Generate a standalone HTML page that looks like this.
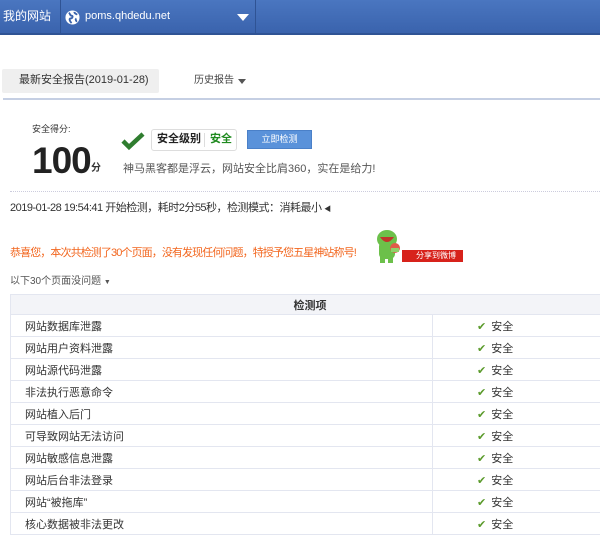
<!DOCTYPE html>
<html><head><meta charset="utf-8"><style>
*{margin:0;padding:0;box-sizing:border-box}
body{width:600px;height:534px;overflow:hidden;background:#fff;font-family:"Liberation Sans","Noto Sans CJK SC",sans-serif;color:#333;position:relative}
.a{position:absolute;white-space:nowrap;line-height:1.2}
.bar{position:absolute;left:0;top:0;width:600px;height:35px;background:linear-gradient(#4a76c0,#3a63ad);border-bottom:2px solid #2f5394}
.div{position:absolute;top:0;width:1px;height:35px;background:#2f5394}
table{position:absolute;left:10px;top:294px;width:600px;border-collapse:collapse;font-size:11px}
td,th{border:1px solid #e3e6f0;height:22px;padding:0}
th{background:#f3f4f8;font-weight:bold;height:20px;color:#333}
td.n{padding-left:14px;width:422px;color:#333}
td.s{padding-left:44px;color:#333}
.ck{color:#5a9a2a;font-size:11px;margin-right:5px}
</style></head><body>
<div class="bar"></div>
<div class="div" style="left:60px"></div>
<div class="div" style="left:255px"></div>
<div class="a" style="left:3px;top:9px;color:#fff;font-size:12px">我的网站</div>
<svg class="a" style="left:65px;top:10px" width="15" height="15" viewBox="0 0 16 16"><circle cx="8" cy="8" r="7.5" fill="#fff"/><path d="M4 3c2 1 1 3 3 3s1 3 -1 3 -1 3 1 5M10 2c0 2 2 2 3 3M11 9c1 1 0 3 2 3" stroke="#3a63ad" stroke-width="2" fill="none"/></svg>
<div class="a" style="left:85px;top:10px;color:#fff;font-size:11px">poms.qhdedu.net</div>
<div class="a" style="left:237px;top:14px;width:0;height:0;border-left:6px solid transparent;border-right:6px solid transparent;border-top:7px solid #fff"></div>

<div class="a" style="left:2px;top:69px;width:157px;height:24px;background:#efefef;border-radius:2px"></div>
<div class="a" style="left:19px;top:74px;font-size:11px;color:#333">最新安全报告(2019-01-28)</div>
<div class="a" style="left:194px;top:75px;font-size:10px;color:#444">历史报告</div>
<div class="a" style="left:238px;top:79px;border-left:4px solid transparent;border-right:4px solid transparent;border-top:5px solid #555"></div>
<div class="a" style="left:3px;top:98px;width:597px;height:2px;background:#c5cfe3"></div>

<div class="a" style="left:32px;top:124px;font-size:9px;color:#333">安全得分:</div>
<div class="a" style="left:32px;top:139px;font-size:37px;font-weight:bold;color:#222;letter-spacing:-1px">100</div>
<div class="a" style="left:91px;top:163px;font-size:10px;font-weight:bold;color:#333">分</div>
<svg class="a" style="left:121px;top:131px" width="24" height="20" viewBox="0 0 24 20"><path d="M2 10l6 6L22 3" stroke="#2f7d2f" stroke-width="4.5" fill="none"/></svg>
<div class="a" style="left:151px;top:129px;width:86px;height:22px;border:1px solid #ddd;border-radius:3px;background:#fff"></div>
<div class="a" style="left:157px;top:133px;font-size:11px;font-weight:bold;color:#222">安全级别</div>
<div class="a" style="left:204px;top:133px;width:1px;height:14px;background:#ddd"></div>
<div class="a" style="left:210px;top:133px;font-size:11px;font-weight:bold;color:#1f8a1f">安全</div>
<div class="a" style="left:247px;top:130px;width:65px;height:19px;background:#5a92da;border:1px solid #4a80c8;color:#fff;font-size:9px;text-align:center;line-height:17px">立即检测</div>
<div class="a" style="left:123px;top:163px;font-size:11px;color:#555">神马黑客都是浮云，网站安全比肩360，实在是给力!</div>
<div class="a" style="left:10px;top:191px;width:590px;border-top:1px dotted #ccd"></div>
<div class="a" style="left:10px;top:202px;font-size:11px;color:#333;letter-spacing:-0.5px">2019-01-28 19:54:41 开始检测，耗时2分55秒，检测模式：消耗最小 <span style="font-size:7px">◀</span></div>

<div class="a" style="left:10px;top:247px;font-size:11px;color:#f2661e;letter-spacing:-0.9px">恭喜您，本次共检测了30个页面，没有发现任何问题，特授予您五星神站称号!</div>
<svg class="a" style="left:374px;top:227px" width="30" height="36" viewBox="0 0 30 36"><ellipse cx="13" cy="12" rx="10" ry="9" fill="#6cc04a"/><rect x="5" y="14" width="16" height="18" rx="5" fill="#6cc04a"/><rect x="6" y="30" width="5" height="6" fill="#6cc04a"/><rect x="14" y="30" width="5" height="6" fill="#6cc04a"/><path d="M6 10q7 10 14 0z" fill="#c0352a"/><circle cx="21" cy="21" r="5" fill="#e05a4a"/><rect x="17" y="21" width="8" height="4" fill="#8fd16a"/></svg>
<div class="a" style="left:402px;top:250px;width:61px;height:12px;background:#d7221b;color:#fff;font-size:8px;line-height:12px;padding-left:14px">分享到微博</div>
<div class="a" style="left:10px;top:276px;font-size:10px;color:#555">以下30个页面没问题 <span style="font-size:7px">▼</span></div>

<table>
<tr><th colspan="2">检测项</th></tr>
<tr><td class="n">网站数据库泄露</td><td class="s"><span class="ck">✔</span>安全</td></tr>
<tr><td class="n">网站用户资料泄露</td><td class="s"><span class="ck">✔</span>安全</td></tr>
<tr><td class="n">网站源代码泄露</td><td class="s"><span class="ck">✔</span>安全</td></tr>
<tr><td class="n">非法执行恶意命令</td><td class="s"><span class="ck">✔</span>安全</td></tr>
<tr><td class="n">网站植入后门</td><td class="s"><span class="ck">✔</span>安全</td></tr>
<tr><td class="n">可导致网站无法访问</td><td class="s"><span class="ck">✔</span>安全</td></tr>
<tr><td class="n">网站敏感信息泄露</td><td class="s"><span class="ck">✔</span>安全</td></tr>
<tr><td class="n">网站后台非法登录</td><td class="s"><span class="ck">✔</span>安全</td></tr>
<tr><td class="n">网站“被拖库”</td><td class="s"><span class="ck">✔</span>安全</td></tr>
<tr><td class="n">核心数据被非法更改</td><td class="s"><span class="ck">✔</span>安全</td></tr>
</table>
</body></html>
